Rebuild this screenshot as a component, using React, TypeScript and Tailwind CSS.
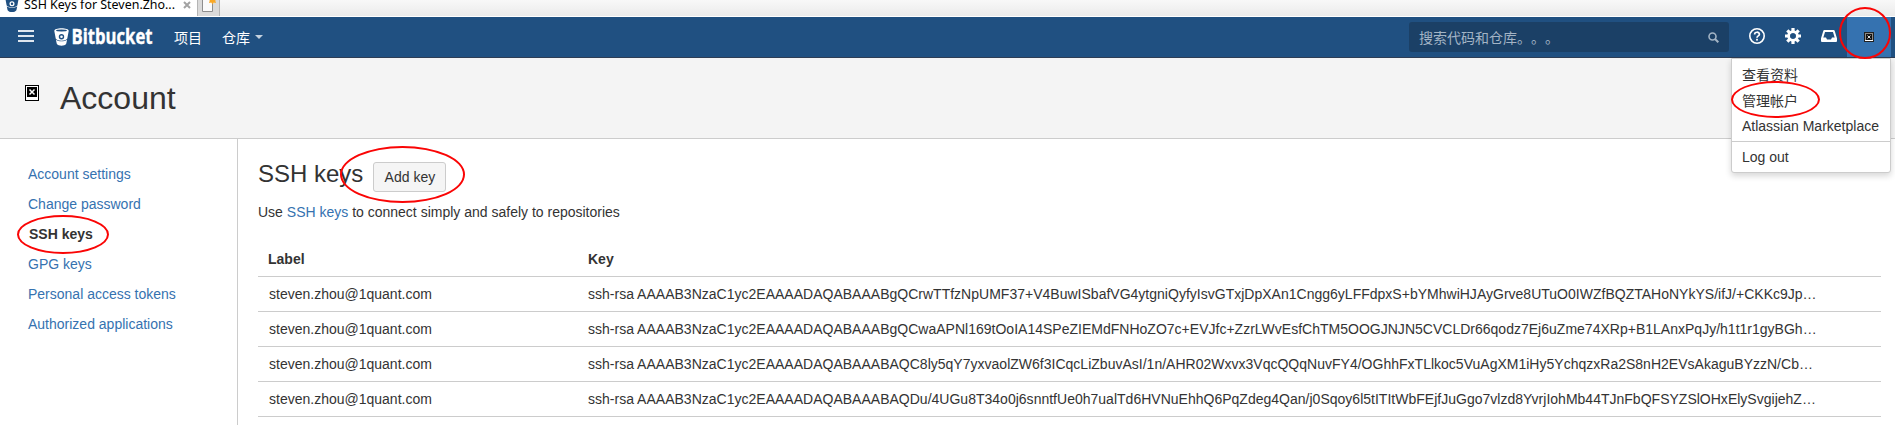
import React from "react";

const NAV = [
  "Account settings",
  "Change password",
  "SSH keys",
  "GPG keys",
  "Personal access tokens",
  "Authorized applications",
];

const KEYS = [
  "ssh-rsa AAAAB3NzaC1yc2EAAAADAQABAAABgQCrwTTfzNpUMF37+V4BuwISbafVG4ytgniQyfyIsvGTxjDpXAn1Cngg6yLFFdpxS+bYMhwiHJAyGrve8UTuO0IWZfBQZTAHoNYkYS/ifJ/+CKKc9Jp…",
  "ssh-rsa AAAAB3NzaC1yc2EAAAADAQABAAABgQCwaAPNl169tOoIA14SPeZIEMdFNHoZO7c+EVJfc+ZzrLWvEsfChTM5OOGJNJN5CVCLDr66qodz7Ej6uZme74XRp+B1LAnxPqJy/h1t1r1gyBGh…",
  "ssh-rsa AAAAB3NzaC1yc2EAAAADAQABAAABAQC8ly5qY7yxvaolZW6f3ICqcLiZbuvAsI/1n/AHR02Wxvx3VqcQQqNuvFY4/OGhhFxTLlkoc5VuAgXM1iHy5YchqzxRa2S8nH2EVsAkaguBYzzN/Cb…",
  "ssh-rsa AAAAB3NzaC1yc2EAAAADAQABAAABAQDu/4UGu8T34o0j6snntfUe0h7ualTd6HVNuEhhQ6PqZdeg4Qan/j0Sqoy6l5tITItWbFEjfJuGgo7vlzd8YvrjIohMb44TJnFbQFSYZSlOHxElySvgijehZ…",
];

function Bucket({ body, eye, className }: { body: string; eye: string; className: string }) {
  return (
    <svg viewBox="0 0 15 18" className={className}>
      <path
        d="M7.5 0.3C3.5 0.3 0.3 1.3 0.3 2.9L1.8 10.7C2.6 11.9 4.9 12.7 7.5 12.7S12.4 11.9 13.2 10.7L14.7 2.9C14.7 1.3 11.5 0.3 7.5 0.3Z"
        fill={body}
      />
      <path d="M1.9 11.8C5 13.8 10 13.800 13.100 11.800L12.2 15.8C11.3 17.2 9.5 17.7 7.5 17.7S3.700 17.2 2.800 15.800Z" fill={body} />
      <ellipse cx="7.5" cy="2.5" rx="5.4" ry="0.9" fill={eye} />
      <circle cx="7.5" cy="8.7" r="2.7" fill={eye} />
      <circle cx="7.5" cy="8.7" r="1.3" fill={body} />
    </svg>
  );
}

function Broken({ className }: { className: string }) {
  return (
    <svg viewBox="0 0 14 16" className={className}>
      <rect width="14" height="16" fill="#000" />
      <rect x="1" y="1" width="12" height="14" fill="#fff" />
      <rect x="2" y="2" width="10" height="10" fill="#000" />
      <path d="M4.5 4.5L9.5 9.5M9.5 4.5L4.5 9.5" stroke="#fff" strokeWidth="1.5" />
    </svg>
  );
}

function SmallBroken({ className }: { className: string }) {
  return (
    <svg viewBox="0 0 10 10" className={className}>
      <rect width="10" height="10" fill="#222" />
      <rect x="1" y="1" width="8" height="8" fill="#8f8a84" />
      <rect x="1" y="8" width="8" height="1" fill="#fff" />
      <rect x="2" y="2" width="6" height="6" fill="#111" />
      <path d="M3.5 3.500L6.500 6.500M6.500 3.500L3.500 6.500" stroke="#ddd" strokeWidth="1" />
    </svg>
  );
}

function Ring({ className }: { className: string }) {
  return <div className={`pointer-events-none absolute z-30 rounded-[50%] border-2 border-[#fa0505] ${className}`} />;
}

function BrowserTabs() {
  return (
    <div className="flex h-[17px] items-start overflow-hidden border-b border-white bg-gradient-to-b from-[#f8f8f8] to-[#ebebeb]">
      <div className="flex h-4 w-[197px] bg-white">
        <Bucket body="#205081" eye="#fff" className="ml-[5px] -mt-[5px] h-[18px] w-[14px] shrink-0" />
        <span className="-mt-[4px] ml-[5px] w-[153px] whitespace-nowrap font-['Noto_Sans',sans-serif] text-[12.45px] leading-[18px] text-black">
          SSH Keys for Steven.Zho...
        </span>
        <svg viewBox="0 0 8 8" className="ml-[6px] mt-[1px] size-2 shrink-0">
          <path d="M1 1L7 7M7 1L1 7" stroke="#a3a3a3" strokeWidth="2" />
        </svg>
      </div>
      <div className="flex h-4 w-[23px] border-x border-[#b5b5b5] bg-[#dadada]">
        <svg viewBox="0 0 21 16" className="h-4 w-[21px]">
          <path d="M4.5 -1V11.5H14.5V-1" fill="#fafafa" stroke="#8e8e8e" />
          <path d="M14.5 -3L15.6 -.5L18 -1.5L17.3 0.8L18 3L15.6 2.4L14.5 4.5L13.3 2.4L11 3L11.7 .8L11 -1.5Z" fill="#f9a825" />
        </svg>
      </div>
    </div>
  );
}

function HeaderBar() {
  return (
    <header className="flex h-[41px] items-start border-b border-[#2e3d54] bg-[#205081] text-sm text-white">
      <svg viewBox="0 0 16 12" className="ml-[18px] mt-[13px] h-3 w-4 shrink-0">
        <path d="M0 1H16M0 6H16M0 11H16" stroke="#dfe6ee" strokeWidth="2" />
      </svg>
      <Bucket body="#fff" eye="#205081" className="ml-5 mt-[11px] h-[18px] w-[15px] shrink-0" />
      <svg viewBox="0 0 84 36" className="ml-[2px] mt-[2px] h-9 w-[84px] shrink-0">
        <text
          x="0.5"
          y="25"
          textLength="81"
          lengthAdjust="spacingAndGlyphs"
          stroke="#fff"
          strokeWidth="0.4"
          className="fill-white font-['Open_Sans',sans-serif] text-[21px] font-bold"
        >
          Bitbucket
        </text>
      </svg>
      <span className="ml-[19px] mt-[11px] leading-5">项目</span>
      <span className="ml-[20px] mt-[11px] leading-5">仓库</span>
      <svg viewBox="0 0 8 4" className="ml-[5px] mt-[18px] h-1 w-2 shrink-0">
        <path d="M0 0H8L4 4Z" fill="#c5d2df" />
      </svg>
      <div className="ml-auto mt-[5px] flex h-[30px] w-[320px] items-center justify-between rounded-[3px] bg-[#1b4066] px-[10px] text-[#a3b4c5]">
        <span className="pt-px leading-5 [text-spacing-trim:space-all]">搜索代码和仓库。。。</span>
        <svg viewBox="0 0 11 11" className="size-[11px]">
          <circle cx="4.5" cy="4.5" r="3.5" fill="none" stroke="#a3b4c5" strokeWidth="1.6" />
          <path d="M7 7L10.3 10.3" stroke="#a3b4c5" strokeWidth="2" />
        </svg>
      </div>
      <svg viewBox="0 0 16 16" className="ml-5 mt-[11px] size-4 shrink-0">
        <circle cx="8" cy="8" r="7.2" fill="none" stroke="#fff" strokeWidth="1.6" />
        <path d="M5.6 6.5C5.6 3.500 10.400 3.500 10.400 6.3C10.400 8 8 7.800 8 9.800" fill="none" stroke="#fff" strokeWidth="1.700" />
        <rect x="7.1" y="10.8" width="1.8" height="1.8" fill="#fff" />
      </svg>
      <svg viewBox="0 0 16 16" className="ml-5 mt-[11px] size-4 shrink-0">
        <path d="M8 0V16M0 8H16M2.3 2.3L13.7 13.7M13.7 2.3L2.3 13.7" stroke="#fff" strokeWidth="3.2" />
        <circle cx="8" cy="8" r="4.3" fill="#205081" stroke="#fff" strokeWidth="3" />
        <circle cx="8" cy="8" r="2.8" fill="#205081" />
      </svg>
      <svg viewBox="0 0 16 12" className="ml-5 mt-[13px] h-3 w-4 shrink-0">
        <path d="M3.3 1H12.7L15 8.5V11H1V8.5Z" fill="none" stroke="#fff" strokeWidth="2" strokeLinejoin="round" />
        <path d="M1 7.5H5L6 9.5H10L11 7.5H15V11H1Z" fill="#fff" />
      </svg>
      <div className="ml-[10px] mr-[4px] h-10 w-11 bg-[#3572b0]">
        <SmallBroken className="ml-[17px] mt-[15px] size-[10px]" />
      </div>
    </header>
  );
}

function UserMenu() {
  return (
    <div className="absolute left-[1731px] top-[58px] z-20 h-[115px] w-[160px] rounded-b-[3px] border border-[#ccc] bg-white text-sm text-[#333] shadow-[0_3px_6px_rgba(0,0,0,0.16)]">
      <div className="flex h-[83px] flex-col border-b border-[#ccc] pl-[10px] pt-[3px]">
        <span className="h-[26px] leading-[26px]">查看资料</span>
        <span className="h-[25px] leading-[26px]">管理帐户</span>
        <span className="h-[26px] whitespace-nowrap leading-[26px]">Atlassian Marketplace</span>
      </div>
      <div className="pl-[10px] leading-[31px]">Log out</div>
    </div>
  );
}

export default function App() {
  return (
    <div className="relative flex h-[425px] w-[1895px] flex-col overflow-hidden bg-white font-['Liberation_Sans','Noto_Sans_CJK_SC',sans-serif] text-sm text-[#333]">
      <BrowserTabs />
      <HeaderBar />
      <div className="flex h-[81px] shrink-0 items-start border-b border-[#ccc] bg-[#f4f4f4]">
        <Broken className="ml-[25px] mt-[27px] h-4 w-[14px]" />
        <h1 className="ml-[21px] mt-[20px] text-[32px] leading-10">Account</h1>
      </div>
      <div className="flex flex-1">
        <nav className="flex w-[238px] flex-col border-r border-[#ccc] pl-7 pt-5">
          {NAV.map((label) => (
            <a
              key={label}
              className={label === "SSH keys" ? "h-[30px] pl-px font-bold leading-[30px] text-[#333]" : "h-[30px] leading-[30px] text-[#3572b0]"}
            >
              {label}
            </a>
          ))}
        </nav>
        <main className="ml-5 w-[1623px]">
          <div className="flex h-[53px] items-start">
            <h2 className="mt-[21px] text-2xl leading-7">SSH keys</h2>
            <button className="ml-[10px] mt-[23px] h-[30px] w-[73px] rounded-[3px] border border-[#ccc] bg-[#f5f5f5] leading-7">Add key</button>
          </div>
          <p className="mt-[10px] leading-5">
            Use <a className="text-[#3572b0]">SSH keys</a> to connect simply and safely to repositories
          </p>
          <div className="mt-[20px] flex h-[35px] items-center border-b border-[#ccc] pl-[10px] font-bold">
            <span className="w-[320px]">Label</span>
            <span>Key</span>
          </div>
          {KEYS.map((k) => (
            <div key={k} className="flex h-[35px] items-center border-b border-[#ccc] pl-[11px]">
              <span className="w-[319px]">steven.zhou@1quant.com</span>
              <span className="whitespace-nowrap tracking-[0.01px]">{k}</span>
            </div>
          ))}
        </main>
      </div>
      <UserMenu />
      <Ring className="left-[1839px] top-[7px] h-[52px] w-[52px]" />
      <Ring className="left-[1731px] top-[81px] h-[37px] w-[89px]" />
      <Ring className="left-[340px] top-[146px] h-[57px] w-[125px]" />
      <Ring className="left-[17px] top-[215px] h-[39px] w-[92px]" />
    </div>
  );
}
